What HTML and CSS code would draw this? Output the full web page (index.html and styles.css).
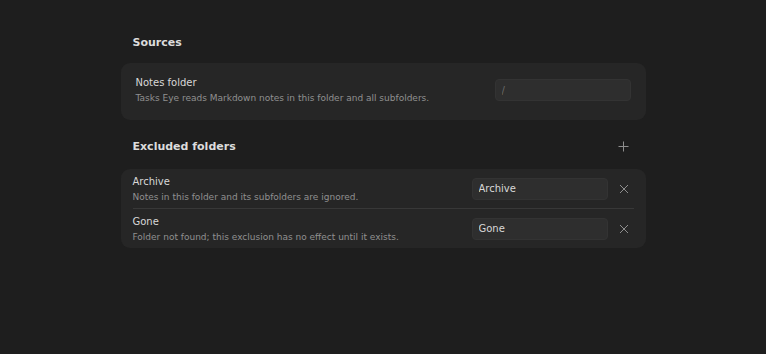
FILE: index.html
```html
<!DOCTYPE html>
<html>
<head>
<meta charset="utf-8">
<link rel="stylesheet" href="styles.css">
</head>
<body>
<div class="page">
  <section class="section">
    <div class="section-head"><h2 class="heading">Sources</h2></div>
    <div class="card card-sources">
      <div class="row">
        <div class="info">
          <div class="title">Notes folder</div>
          <div class="desc">Tasks Eye reads Markdown notes in this folder and all subfolders.</div>
        </div>
        <input class="field" type="text" placeholder="/">
      </div>
    </div>
  </section>
  <section class="section">
    <div class="section-head head-tall">
      <h2 class="heading">Excluded folders</h2>
      <button class="icon-btn" aria-label="Add">
        <svg width="11" height="11" viewBox="0 0 11 11"><path d="M5.5 0.5v10M0.5 5.5h10" stroke="currentColor" stroke-width="1" fill="none"/></svg>
      </button>
    </div>
    <div class="card card-list">
      <div class="row item">
        <div class="info">
          <div class="title">Archive</div>
          <div class="desc">Notes in this folder and its subfolders are ignored.</div>
        </div>
        <input class="field" type="text" value="Archive">
        <button class="icon-btn" aria-label="Remove">
          <svg width="10" height="10" viewBox="0 0 10 10"><path d="M1 1l8 8M9 1l-8 8" stroke="currentColor" stroke-width="1" fill="none"/></svg>
        </button>
      </div>
      <div class="row item">
        <div class="info">
          <div class="title">Gone</div>
          <div class="desc">Folder not found; this exclusion has no effect until it exists.</div>
        </div>
        <input class="field" type="text" value="Gone">
        <button class="icon-btn" aria-label="Remove">
          <svg width="10" height="10" viewBox="0 0 10 10"><path d="M1 1l8 8M9 1l-8 8" stroke="currentColor" stroke-width="1" fill="none"/></svg>
        </button>
      </div>
    </div>
  </section>
</div>
</body>
</html>
```

FILE: styles.css
```css
html, body {
  margin: 0;
  padding: 0;
  background: #1e1e1e;
  font-family: "DejaVu Sans", sans-serif;
  color: #dadada;
}
.page {
  width: 525px;
  margin: 0 auto;
  padding-top: 33px;
  display: flex;
  flex-direction: column;
  gap: 15px;
}
.section {
  display: flex;
  flex-direction: column;
  gap: 12px;
}
.section-head {
  display: flex;
  align-items: center;
  justify-content: space-between;
  padding: 0 12px;
  height: 18px;
}
.head-tall {
  height: 22px;
}
.heading {
  margin: 0;
  font-size: 11px;
  font-weight: bold;
  color: #dcdcdc;
}
.icon-btn {
  width: 20px;
  height: 20px;
  padding: 0;
  border: none;
  background: transparent;
  color: #8e8e8e;
  display: flex;
  align-items: center;
  justify-content: center;
}
.card {
  background: #262626;
  border-radius: 9px;
}
.card-sources {
  padding: 0 15px;
}
.card-sources .row {
  height: 57px;
  box-sizing: border-box;
  padding-bottom: 3px;
}
.card-list {
  padding: 0 12px;
}
.row {
  display: flex;
  align-items: center;
  gap: 6px;
}
.item {
  height: 39px;
}
.item + .item {
  border-top: 1px solid #383838;
  height: 39px;
}
.info {
  flex: 1;
  display: flex;
  flex-direction: column;
  gap: 5px;
}
.title {
  font-size: 10px;
  color: #d8d8d8;
}
.desc {
  font-size: 9px;
  color: #909090;
}
.field {
  width: 136px;
  height: 22px;
  box-sizing: border-box;
  background: #2e2e2e;
  border: 1px solid #333;
  border-radius: 4px;
  padding: 0 6px;
  font-family: "DejaVu Sans", sans-serif;
  font-size: 10px;
  color: #d8d8d8;
  outline: none;
}
.field::placeholder {
  color: #6a6a6a;
}
```
